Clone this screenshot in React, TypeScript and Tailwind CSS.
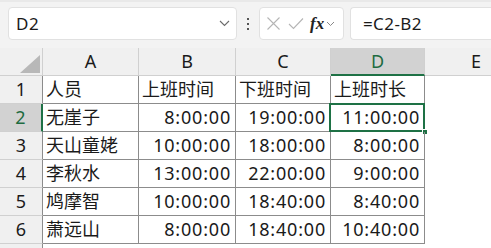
import React from 'react';

const cols = [
  { key: 'A', w: 'w-[96px]' },
  { key: 'B', w: 'w-[97px]' },
  { key: 'C', w: 'w-[95px]' },
  { key: 'D', w: 'w-[94px]' },
];

const rows = [
  ['人员', '上班时间', '下班时间', '上班时长'],
  ['无崖子', '8:00:00', '19:00:00', '11:00:00'],
  ['天山童姥', '10:00:00', '18:00:00', '8:00:00'],
  ['李秋水', '13:00:00', '22:00:00', '9:00:00'],
  ['鸠摩智', '10:00:00', '18:40:00', '8:40:00'],
  ['萧远山', '8:00:00', '18:40:00', '10:40:00'],
];

const font = { fontFamily: '"Noto Sans", "Noto Sans CJK SC", sans-serif' };

export default function App() {
  return (
    <div className="w-[491px] h-[248px] overflow-hidden bg-white text-[#1a1a1a]" style={font}>
      {/* Formula bar */}
      <div className="h-[48px] bg-[#f3f3f3] border-t-[2px] border-[#e9e9e9] flex items-start pt-[5px] pl-[8px] gap-[6px]">
        <div className="w-[229px] h-[33px] bg-white rounded-[4px] border border-[#e1e1e1] flex items-center justify-between pl-[7px] pr-[6px]">
          <span className="text-[17px] tracking-[0.5px]">D2</span>
          <svg width="11" height="7" viewBox="0 0 11 7" fill="none" stroke="#6b6b6b" strokeWidth="1.1">
            <path d="M1 1l4.5 4.5L10 1" />
          </svg>
        </div>
        <div className="w-[10px] h-[33px] flex flex-col items-center justify-center gap-[3px]">
          <span className="w-[2px] h-[2px] bg-[#555]" />
          <span className="w-[2px] h-[2px] bg-[#555]" />
          <span className="w-[2px] h-[2px] bg-[#555]" />
        </div>
        <div className="w-[85px] h-[33px] bg-white rounded-[4px] border border-[#e1e1e1] flex items-center pl-[6px] gap-[7px]">
          <svg width="15" height="15" viewBox="0 0 15 15" stroke="#b5b5b5" strokeWidth="1.1">
            <path d="M1.5 1.5l12 12M13.5 1.5l-12 12" />
          </svg>
          <svg width="16" height="13" viewBox="0 0 16 13" fill="none" stroke="#b5b5b5" strokeWidth="1.1">
            <path d="M1 7l4.5 4.5L15 1.5" />
          </svg>
          <span className="italic font-bold text-[17px] text-[#222] leading-none -ml-[1px]" style={{ fontFamily: '"Liberation Serif", serif' }}>
            fx
          </span>
          <svg width="9" height="6" viewBox="0 0 9 6" fill="none" stroke="#888" strokeWidth="1" className="-ml-[5px]">
            <path d="M1 1l3.5 3.5L8 1" />
          </svg>
        </div>
        <div className="flex-1 h-[33px] bg-white rounded-l-[4px] border border-r-0 border-[#e1e1e1] flex items-center pl-[12px]">
          <span className="text-[17px] tracking-[0.4px]">=C2-B2</span>
        </div>
      </div>

      {/* Column headers */}
      <div className="flex h-[28px] bg-[#f0f0f0]">
        <div className="w-[43px] border-r border-b border-[#d0d0d0] flex items-end justify-end pr-[2px] pb-[2px]">
          <div className="w-0 h-0 border-l-[20px] border-l-transparent border-b-[18px] border-b-[#b8b8b8]" />
        </div>
        {cols.map((c) =>
          c.key === 'D' ? (
            <div key={c.key} className={`${c.w} bg-[#d2d2d2] border-r border-[#d0d0d0] border-b-[2px] border-b-[#1e7145] flex items-center justify-center text-[18px] text-[#1e6b41]`}>
              {c.key}
            </div>
          ) : (
            <div key={c.key} className={`${c.w} border-r border-b border-[#d0d0d0] flex items-center justify-center text-[18px]`}>
              {c.key}
            </div>
          )
        )}
        <div className="flex-1 border-b border-[#d0d0d0] flex items-center justify-start pl-[46px] text-[18px]">E</div>
      </div>

      {/* Rows */}
      {[...rows, null].map((r, i) => (
        <div key={i} className="flex h-[28px]">
          <div
            className={`w-[43px] border-b border-[#d0d0d0] flex items-center justify-center text-[18px] ${
              i === 1 ? 'bg-[#d2d2d2] text-[#1e6b41] border-r-[2px] border-r-[#1e7145]' : 'bg-[#f0f0f0] border-r border-r-[#8c8c8c]'
            }`}
          >
            {r ? i + 1 : ''}
          </div>
          {cols.map((c, j) => {
            const selected = i === 1 && j === 3;
            const v = r ? r[j] : '';
            const numeric = i > 0 && j > 0;
            return (
              <div
                key={c.key}
                className={`${c.w} relative flex items-center text-[18px] ${r ? 'border-r border-b border-[#8c8c8c]' : ''} ${
                  numeric ? 'justify-end pr-[4px] tracking-[0.8px]' : 'justify-start pl-[3px]'
                }`}
              >
                {v}
                {selected && (
                  <>
                    <div className="absolute -left-[2px] -top-[1px] right-[-1px] bottom-[-1px] border-[2px] border-[#1e7145] pointer-events-none" />
                    <div className="absolute -right-[4px] -bottom-[4px] w-[6px] h-[6px] bg-[#1e7145] border border-white" />
                  </>
                )}
              </div>
            );
          })}
          <div className="flex-1" />
        </div>
      ))}
    </div>
  );
}
